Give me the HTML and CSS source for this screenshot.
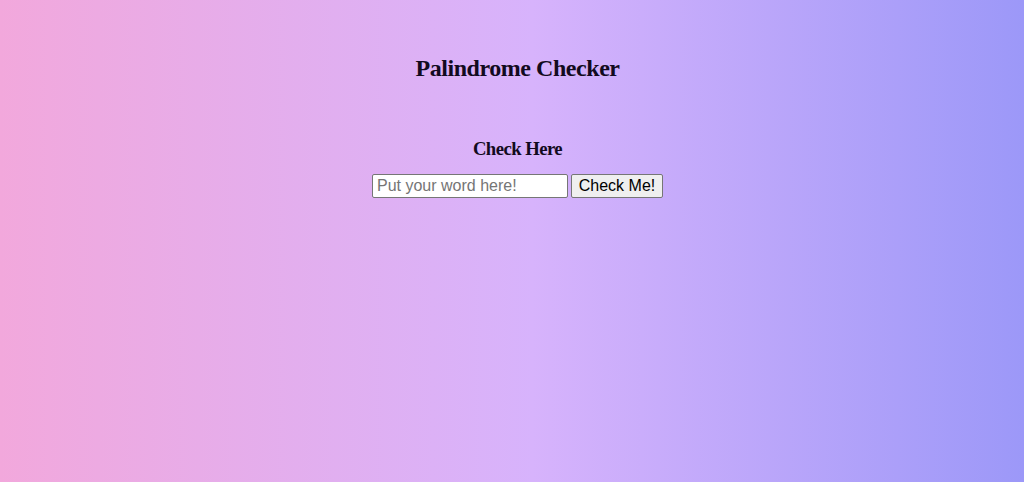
FILE: index.html
```html
<!DOCTYPE html>
<html lang="en">
<head>
<meta charset="utf-8">
<title>Palindrome Checker</title>
<link rel="stylesheet" href="styles.css">
</head>
<body>
<main class="page">
  <h2 class="title">Palindrome Checker</h2>
  <section class="checker">
    <h3 class="subtitle">Check Here</h3>
    <form class="form">
      <input class="word" type="text" placeholder="Put your word here!">
      <button class="btn" type="button">Check Me!</button>
    </form>
  </section>
</main>
</body>
</html>
```
FILE: styles.css
```css
html, body {
  margin: 0;
  height: 100%;
}
body {
  background: linear-gradient(to right, #f2a8dc 0%, #d7b3fc 52%, #9c98f8 100%);
  font-family: "Liberation Serif", "Times New Roman", serif;
  color: #000;
}
.page {
  display: flex;
  flex-direction: column;
  align-items: center;
  padding: 54px 0 0 11px;
}
.title {
  margin: 0;
  font-size: 24px;
  line-height: 28px;
  font-weight: bold;
  letter-spacing: -0.45px;
  color: #120a20;
}
.checker {
  display: flex;
  flex-direction: column;
  align-items: center;
  margin-top: 56px;
}
.subtitle {
  margin: 0;
  font-size: 18.72px;
  line-height: 22px;
  font-weight: bold;
  letter-spacing: -0.55px;
  color: #120a20;
}
.form {
  display: flex;
  gap: 3px;
  margin-top: 14px;
}
.word {
  width: 196px;
  height: 24px;
  box-sizing: border-box;
  font-family: "Liberation Sans", Arial, sans-serif;
  font-size: 16px;
  padding: 1px 4px;
  border: 1px solid #767676;
  border-radius: 2px;
  background: #fff;
  color: #000;
}
.word::placeholder {
  color: #757575;
}
.btn {
  width: 92px;
  height: 24px;
  box-sizing: border-box;
  font-family: "Liberation Sans", Arial, sans-serif;
  font-size: 16px;
  padding: 1px 6px;
  border: 1px solid #767676;
  border-radius: 2px;
  background: #efefef;
  color: #000;
}
```
